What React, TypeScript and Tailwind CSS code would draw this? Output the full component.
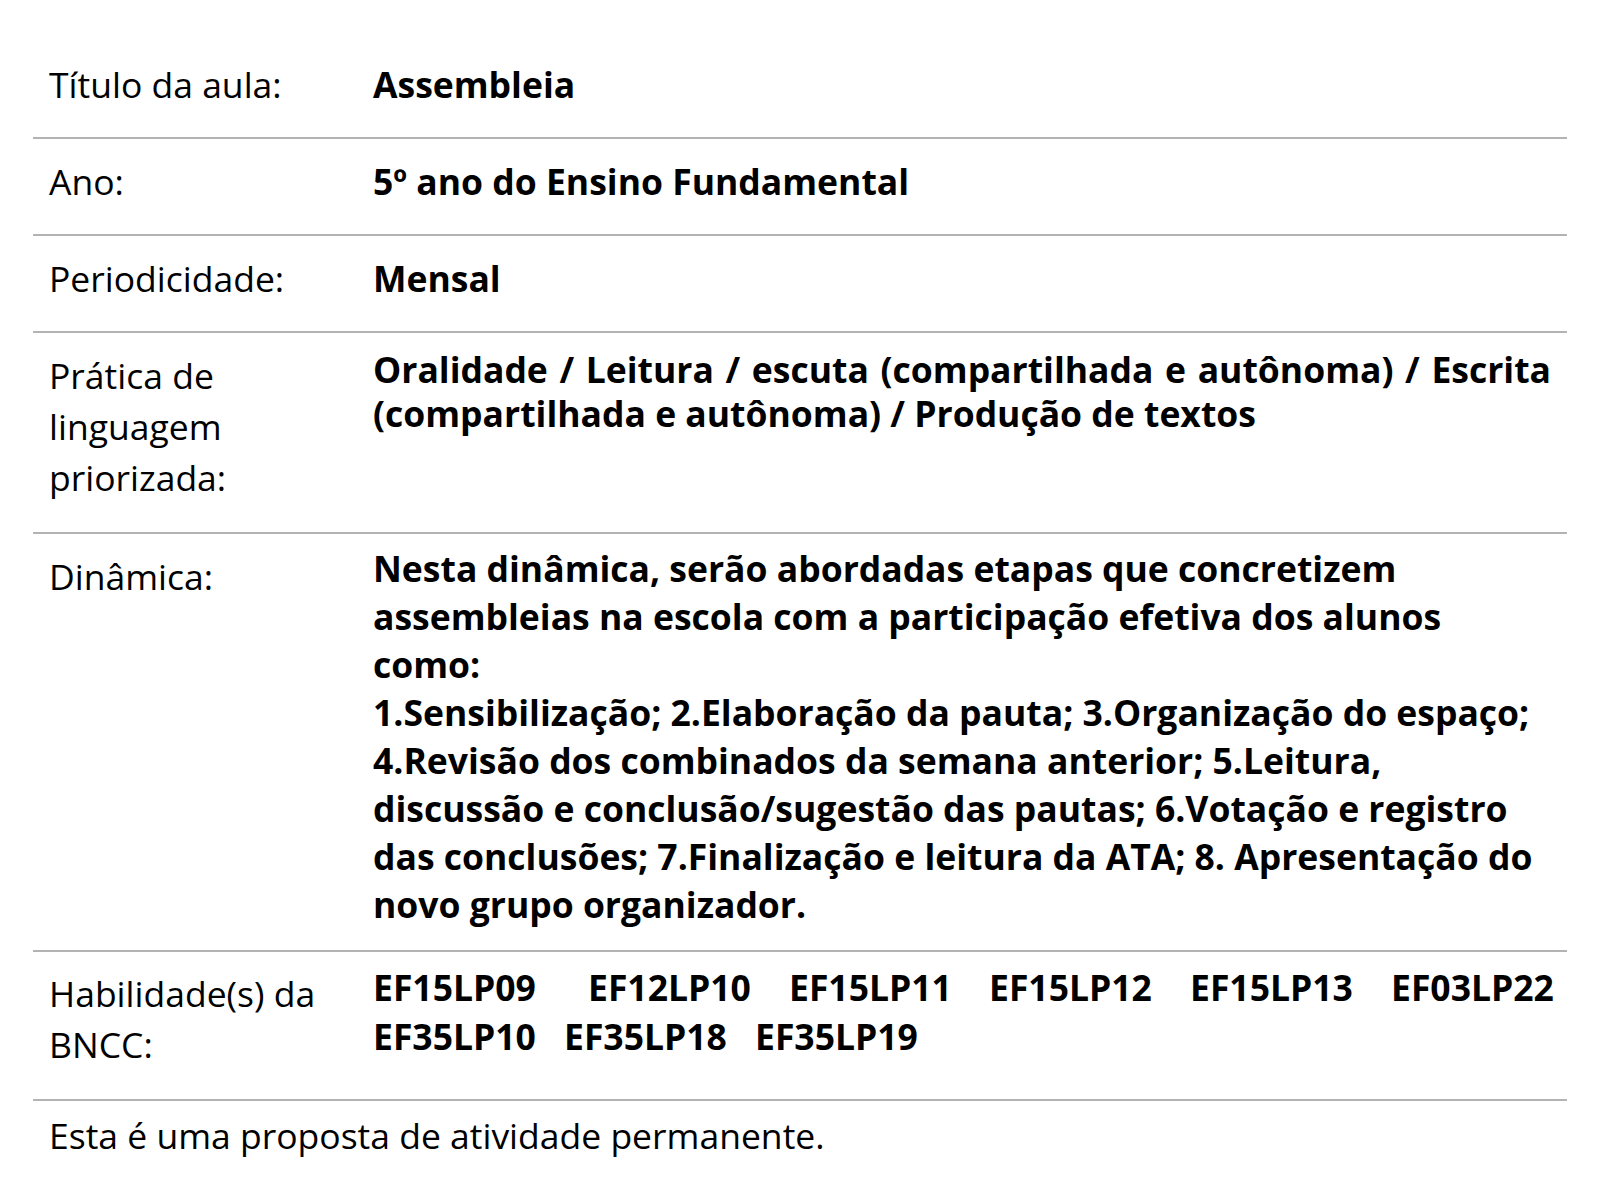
import React from "react";

const Label: React.FC<{ children: React.ReactNode; className?: string }> = ({ children, className }) => (
  <div className={"w-[340px] shrink-0 pl-4 pr-4 text-[35.5px] leading-[51px] " + (className ?? "pt-[17px] pb-[27px]")}>
    {children}
  </div>
);

const firstLine = [
  { code: "EF15LP09", w: "w-[215px]" },
  { code: "EF12LP10", w: "w-[201px]" },
  { code: "EF15LP11", w: "w-[200px]" },
  { code: "EF15LP12", w: "w-[201px]" },
  { code: "EF15LP13", w: "w-[201px]" },
  { code: "EF03LP22", w: "w-auto" },
];

const secondLine = [
  { code: "EF35LP10", w: "w-[191px]" },
  { code: "EF35LP18", w: "w-[191px]" },
  { code: "EF35LP19", w: "w-auto" },
];

export default function App() {
  return (
    <div className="min-h-[1200px] bg-white text-black font-['Open_Sans',sans-serif]">
      <div className="mx-[33px] pt-[42px]">
        <div className="flex border-b-2 border-[#b3b3b3]">
          <Label>Título da aula:</Label>
          <div className="flex-1 pr-4 pt-[18px] text-[35.5px] font-bold leading-[48px]">Assembleia</div>
        </div>

        <div className="flex border-b-2 border-[#b3b3b3]">
          <Label>Ano:</Label>
          <div className="flex-1 pr-4 pt-[18px] text-[35.5px] font-bold leading-[48px]">5º ano do Ensino Fundamental</div>
        </div>

        <div className="flex border-b-2 border-[#b3b3b3]">
          <Label>Periodicidade:</Label>
          <div className="flex-1 pr-4 pt-[18px] text-[35.5px] font-bold leading-[48px]">Mensal</div>
        </div>

        <div className="flex border-b-2 border-[#b3b3b3]">
          <Label className="pt-[17px] pb-[29px]">
            Prática de
            <br />
            linguagem
            <br />
            priorizada:
          </Label>
          <div className="flex-1 pr-4 pt-[14px] text-justify text-[35.5px] font-bold leading-[44px]">
            Oralidade / Leitura / escuta (compartilhada e autônoma) / Escrita (compartilhada e autônoma) / Produção de textos
          </div>
        </div>

        <div className="flex border-b-2 border-[#b3b3b3]">
          <Label>Dinâmica:</Label>
          <div className="flex-1 pr-4 pt-[10px] pb-[22px] text-[35.5px] font-bold leading-[48px]">
            Nesta dinâmica, serão abordadas etapas que concretizem assembleias na escola com a participação efetiva dos
            alunos como:
            <br />
            1.Sensibilização; 2.Elaboração da pauta; 3.Organização do espaço; 4.Revisão dos combinados da semana
            anterior; 5.Leitura, discussão e conclusão/sugestão das pautas; 6.Votação e registro das conclusões;
            7.Finalização e leitura da ATA; 8. Apresentação do novo grupo organizador.
          </div>
        </div>

        <div className="flex border-b-2 border-[#b3b3b3]">
          <Label className="pt-[16px] pb-[29px]">
            Habilidade(s) da
            <br />
            BNCC:
          </Label>
          <div className="flex-1 pr-4 pt-[11px] text-[35.5px] font-bold leading-[49px]">
            <div className="flex">
              {firstLine.map((c) => (
                <span key={c.code} className={c.w}>
                  {c.code}
                </span>
              ))}
            </div>
            <div className="flex">
              {secondLine.map((c) => (
                <span key={c.code} className={c.w}>
                  {c.code}
                </span>
              ))}
            </div>
          </div>
        </div>

        <div className="pl-4 pt-[9px] text-[35.5px] leading-[51px]">Esta é uma proposta de atividade permanente.</div>
      </div>
    </div>
  );
}
